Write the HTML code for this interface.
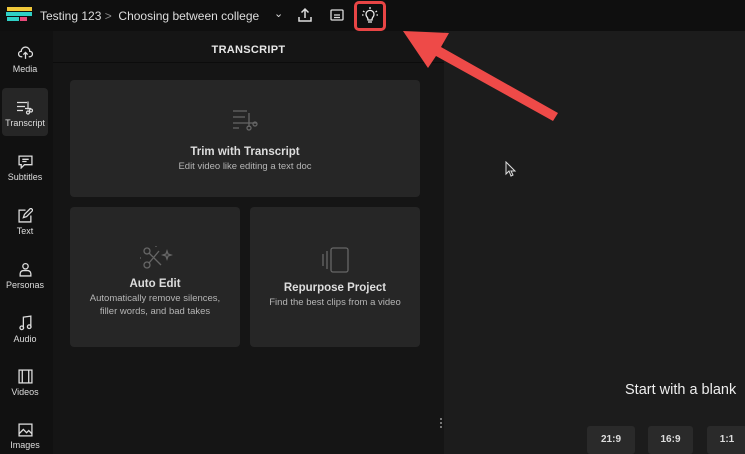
<!DOCTYPE html>
<html><head><meta charset="utf-8"><style>
*{margin:0;padding:0;box-sizing:border-box}
body{width:745px;height:454px;overflow:hidden;background:#1c1c1c;font-family:"Liberation Sans",sans-serif;color:#ddd;position:relative}
.top{position:absolute;left:0;top:0;width:745px;height:31px;background:#0f0f0f}
.side{position:absolute;left:0;top:31px;width:53px;height:423px;background:#111}
.panel{position:absolute;left:53px;top:31px;width:391px;height:423px;background:#151515}
.hdr{position:absolute;left:53px;top:31px;width:391px;height:32px;border-bottom:1px solid #0c0c0c;text-align:center;font-size:11px;font-weight:bold;line-height:38px;color:#e6e6e6;letter-spacing:.3px}
.card{position:absolute;background:#262626;border-radius:4px;text-align:center}
.card b{display:block;font-size:11.5px;color:#ddd}
.card span{display:block;font-size:9.5px;color:#b5b5b5;line-height:12.5px}
.nav{position:absolute;left:0;width:50px;text-align:center;font-size:9px;color:#ddd}
.nav svg{display:block;margin:0 auto 3px}
.btn{position:absolute;top:426px;height:28px;background:#2a2a2a;border-radius:3px;font-size:10px;font-weight:bold;color:#ddd;text-align:center;line-height:28px}
</style></head><body>
<div class="top"></div>
<div style="position:absolute;left:7px;top:7px;width:12px;height:4px;background:#f0c83a"></div>
<div style="position:absolute;left:19px;top:7px;width:13px;height:4px;background:#f0c83a"></div>
<div style="position:absolute;left:6px;top:12px;width:26px;height:4px;background:#2fd0c6"></div>
<div style="position:absolute;left:7px;top:17px;width:12px;height:4px;background:#2fd0c6"></div>
<div style="position:absolute;left:20px;top:17px;width:7px;height:4px;background:#e84a7a"></div>
<div style="position:absolute;left:40px;top:9px;font-size:12px;color:#ddd">Testing 123 <span style="color:#888">&gt;</span> &nbsp;Choosing between college</div>
<div style="position:absolute;left:274px;top:7px;font-size:11px;color:#ddd">⌄</div>
<svg style="position:absolute;left:297px;top:7px" width="16" height="16" viewBox="0 0 16 16" fill="none" stroke="#ddd" stroke-width="1.5"><path d="M8 11V2M4.5 5.5L8 2l3.5 3.5M2 10v4h12v-4"/></svg>
<svg style="position:absolute;left:330px;top:9px" width="14" height="12" viewBox="0 0 14 12" fill="none" stroke="#ddd" stroke-width="1.3"><rect x="1" y="1" width="12" height="10" rx="1"/><path d="M4 6h6M4 8.5h6"/></svg>
<div style="position:absolute;left:354px;top:1px;width:32px;height:30px;border:3px solid #e84545;border-radius:5px"></div>
<svg style="position:absolute;left:362px;top:7px" width="16" height="17" viewBox="0 0 16 17" fill="none" stroke="#eee" stroke-width="1.3"><path d="M5 10a4 4 0 1 1 6 0c-1 1-1 2-1 3H6c0-1 0-2-1-3zM6 15h4M8 0v2M1 4l1.5 1M15 4l-1.5 1M0 8h1.5M16 8h-1.5"/></svg>
<div class="side"></div>
<div style="position:absolute;left:2px;top:88px;width:46px;height:48px;background:#262626;border-radius:4px"></div>
<div class="nav" style="top:46px"><svg width="15" height="15" viewBox="0 0 14 14" fill="none" stroke="#ddd" stroke-width="1.2"><path d="M4 10H3a2.5 2.5 0 0 1 0-5 4 4 0 0 1 8 0 2.5 2.5 0 0 1 0 5h-1M7 12V6M5 8l2-2 2 2"/></svg>Media</div>
<div class="nav" style="top:100px"><svg width="20" height="15" viewBox="0 0 20 14" fill="none" stroke="#ddd" stroke-width="1.2"><path d="M2 2h10M2 6h8M2 10h6M13 1v8M10 8h6"/><circle cx="16" cy="10" r="1.5"/><circle cx="13" cy="12" r="1.5"/></svg>Transcript</div>
<div class="nav" style="top:155px"><svg width="15" height="14" viewBox="0 0 14 13" fill="none" stroke="#ddd" stroke-width="1.2"><path d="M1 1h12v8H6l-3 3V9H1z M4 4h6M4 6h4"/></svg>Subtitles</div>
<div class="nav" style="top:208px"><svg width="15" height="15" viewBox="0 0 14 14" fill="none" stroke="#ddd" stroke-width="1.2"><path d="M7 2H1v11h11V7M5 9l1-3 6-6 2 2-6 6z"/></svg>Text</div>
<div class="nav" style="top:262px"><svg width="15" height="15" viewBox="0 0 14 14" fill="none" stroke="#ddd" stroke-width="1.2"><circle cx="7" cy="4" r="2.5"/><path d="M2 13v-2a3 3 0 0 1 3-3h4a3 3 0 0 1 3 3v2z"/></svg>Personas</div>
<div class="nav" style="top:315px"><svg width="15" height="16" viewBox="0 0 14 15" fill="none" stroke="#ddd" stroke-width="1.2"><path d="M5 12V2l7-1v10"/><circle cx="3.5" cy="12" r="1.7"/><circle cx="10.5" cy="11" r="1.7"/></svg>Audio</div>
<div class="nav" style="top:369px"><svg width="15" height="15" viewBox="0 0 14 14" fill="none" stroke="#ddd" stroke-width="1.2"><rect x="1" y="1" width="12" height="12"/><path d="M4 1v12M10 1v12"/></svg>Videos</div>
<div class="nav" style="top:423px"><svg width="15" height="14" viewBox="0 0 14 13" fill="none" stroke="#ddd" stroke-width="1.2"><rect x="1" y="1" width="12" height="11"/><path d="M1 10l4-4 3 3 2-2 3 3"/></svg>Images</div>
<div class="panel"></div>
<div class="hdr">TRANSCRIPT</div>
<div class="card" style="left:70px;top:80px;width:350px;height:117px">
<svg style="margin-top:29px" width="28" height="22" viewBox="0 0 28 22" fill="none" stroke="#666" stroke-width="1.3"><path d="M2 2h14M2 8h12M2 14h10M2 19h6M18 4v14M12 14h14"/><circle cx="24" cy="15" r="2"/><circle cx="18" cy="19" r="2"/></svg>
<b style="margin-top:10px">Trim with Transcript</b><span style="margin-top:3px">Edit video like editing a text doc</span></div>
<div class="card" style="left:70px;top:207px;width:170px;height:140px">
<svg style="margin-top:36px" width="36" height="28" viewBox="0 0 36 28" fill="none" stroke="#666" stroke-width="1.3"><circle cx="10" cy="8" r="3"/><circle cx="10" cy="22" r="3"/><path d="M12 10l12 12M12 20l10-12M30 8l1 3 3 1-3 1-1 3-1-3-3-1 3-1zM3 15h1M19 3v1"/></svg>
<b style="margin-top:2px">Auto Edit</b><span style="margin-top:3px">Automatically remove silences,<br>filler words, and bad takes</span></div>
<div class="card" style="left:250px;top:207px;width:170px;height:140px">
<svg style="margin-top:40px" width="30" height="26" viewBox="0 0 30 26" fill="none" stroke="#666" stroke-width="1.3"><rect x="11" y="1" width="17" height="24" rx="2"/><path d="M7 4v18M3 7v12"/></svg>
<b style="margin-top:4px">Repurpose Project</b><span style="margin-top:3px">Find the best clips from a video</span></div>
<div style="position:absolute;left:440px;top:418px;width:2px;height:10px;border-left:2px dotted #777"></div>
<svg style="position:absolute;left:0;top:0" width="745" height="454"><path d="M403 31L449 33L441 47L558 113L553 121L436 56L428 68Z" fill="#ee4a48"/></svg>
<svg style="position:absolute;left:505px;top:161px" width="12" height="16" viewBox="0 0 12 16"><path d="M1 1v12l3-3 2 5 2-1-2-4h4z" fill="#222" stroke="#ddd" stroke-width="1"/></svg>
<div style="position:absolute;left:625px;top:382px;font-size:14.5px;color:#eee;white-space:nowrap">Start with a blank</div>
<div class="btn" style="left:587px;width:48px">21:9</div>
<div class="btn" style="left:648px;width:45px">16:9</div>
<div class="btn" style="left:707px;width:40px">1:1</div>
</body></html>
